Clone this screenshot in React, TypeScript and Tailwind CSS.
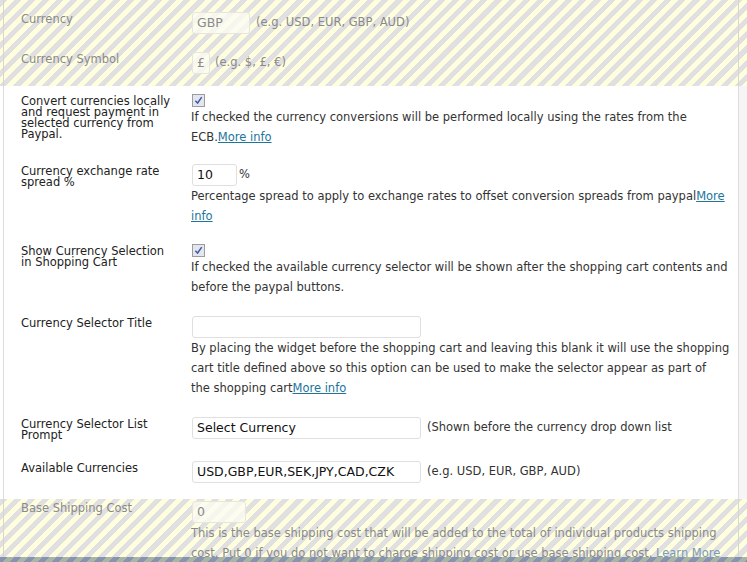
import type { ReactNode } from 'react';

const stripes =
	'bg-[repeating-linear-gradient(135deg,#e0e0e0_0px,#e0e0e0_5px,#ffffdf_5px,#ffffdf_10px)]';

function Link({ children }: { children: ReactNode }) {
	return <a className="text-[#21759b] underline">{children}</a>;
}

function Checkbox() {
	return (
		<span className="flex h-[13px] w-[13px] items-center justify-center border border-[#9c9c9c] bg-[#e4e6ef]">
			<svg viewBox="0 0 10 10" className="h-[9px] w-[9px]">
				<path d="M1.5 5.2 L4 7.8 L8.6 1.2" fill="none" stroke="#3d5aa6" strokeWidth="1.6" />
			</svg>
		</span>
	);
}

function Row({
	label,
	children,
	className = '',
}: {
	label: ReactNode;
	children: ReactNode;
	className?: string;
}) {
	return (
		<div className={`flex ${className}`}>
			<div className="w-[188px] shrink-0 pl-[17px] pr-[20px] pt-[2px] text-[11.5px] leading-[11px] text-[#222]">
				{label}
			</div>
			<div className="flex-1">{children}</div>
		</div>
	);
}

function DisabledRow({
	label,
	children,
	className = '',
}: {
	label: ReactNode;
	children: ReactNode;
	className?: string;
}) {
	return (
		<div className={`flex ${className}`}>
			<div className="w-[188px] shrink-0 pl-[17px] pr-[20px] pt-[2px] text-[11.5px] leading-[11px]">
				{label}
			</div>
			<div className="flex-1">{children}</div>
		</div>
	);
}

function Desc({ children }: { children: ReactNode }) {
	return <p className="-ml-px whitespace-nowrap text-[11.5px] leading-[20px]">{children}</p>;
}

const input = 'h-[22px] rounded-[3px] border border-[#dfdfdf] px-[4px] text-[12.5px] leading-[20px]';

export default function App() {
	return (
		<div className="h-[562px] overflow-hidden bg-white font-['DejaVu_Sans',Verdana,sans-serif] text-[#333]">
			{/* disabled rows */}
			<section className={stripes}>
				<div className="ml-[3px] w-[736px] border-x border-[#d6d6cc] pb-[12px] pt-[12px] text-[#8a8a8a]">
					<DisabledRow label="Currency">
						<div className="flex items-center gap-[6px]">
							<div className={`${input} w-[58px] border-[#e6e6dc] bg-[#fbfbf2]/80 text-[#8a8a8a]`}>GBP</div>
							<span className="text-[11.5px]">(e.g. USD, EUR, GBP, AUD)</span>
						</div>
					</DisabledRow>
					<DisabledRow label="Currency Symbol" className="mt-[18px]">
						<div className="flex items-center gap-[5px]">
							<div className={`${input} w-[18px] border-[#e6e6dc] bg-[#fbfbf2]/80 px-[3px] text-[#8a8a8a]`}>£</div>
							<span className="text-[11.5px]">(e.g. $, £, €)</span>
						</div>
					</DisabledRow>
				</div>
			</section>

			{/* enabled rows */}
			<section className="flex">
				<div className="ml-[3px] w-[736px] border-x border-[#dcdcdc] bg-white pb-[16px] pt-[8px] text-[#333]">
					<Row label="Convert currencies locally and request payment in selected currency from Paypal.">
						<Checkbox />
						<Desc>
							If checked the currency conversions will be performed locally using the rates from the
							<br />
							ECB.<Link>More info</Link>
						</Desc>
					</Row>
					<Row label="Currency exchange rate spread %" className="mt-[17px]">
						<div className="flex items-center gap-[2px]">
							<div className={`${input} w-[45px] text-[#111]`}>10</div>
							<span className="text-[11.5px]">%</span>
						</div>
						<Desc>
							Percentage spread to apply to exchange rates to offset conversion spreads from paypal
							<Link>
								More
								<br />
								info
							</Link>
						</Desc>
					</Row>
					<Row label="Show Currency Selection in Shopping Cart" className="mt-[18px]">
						<Checkbox />
						<Desc>
							If checked the available currency selector will be shown after the shopping cart contents and
							<br />
							before the paypal buttons.
						</Desc>
					</Row>
					<Row label="Currency Selector Title" className="mt-[19px]">
						<div className={`${input} w-[229px]`} />
						<Desc>
							By placing the widget before the shopping cart and leaving this blank it will use the shopping
							<br />
							cart title defined above so this option can be used to make the selector appear as part of
							<br />
							the shopping cart<Link>More info</Link>
						</Desc>
					</Row>
					<Row label="Currency Selector List Prompt" className="mt-[19px]">
						<div className="flex items-center gap-[6px]">
							<div className={`${input} w-[229px] text-[#111]`}>Select Currency</div>
							<span className="text-[11.5px]">(Shown before the currency drop down list</span>
						</div>
					</Row>
					<Row label="Available Currencies" className="mt-[20px]">
						<div className="flex items-center gap-[6px]">
							<div className={`${input} w-[229px] text-[#111]`}>USD,GBP,EUR,SEK,JPY,CAD,CZK</div>
							<span className="text-[11.5px]">(e.g. USD, EUR, GBP, AUD)</span>
						</div>
					</Row>
				</div>
				<div className="flex-1 bg-[#f5f5f5]" />
			</section>

			{/* disabled rows */}
			<section className={stripes}>
				<div className="ml-[3px] h-[58px] w-[736px] overflow-hidden border-x border-[#d6d6cc] pt-[2px] text-[#8a8a8a]">
					<DisabledRow label="Base Shipping Cost">
						<div className={`${input} w-[54px] border-[#e6e6dc] bg-[#fbfbf2]/80 text-[#8a8a8a]`}>0</div>
						<Desc>
							This is the base shipping cost that will be added to the total of individual products shipping
							<br />
							cost. Put 0 if you do not want to charge shipping cost or use base shipping cost.{' '}
							<span className="text-[#7a9bb0]">Learn More</span>
						</Desc>
					</DisabledRow>
				</div>
			</section>
			<div className="h-[6px] bg-[repeating-linear-gradient(135deg,#8794b0_0px,#8794b0_5px,#a9b4a8_5px,#a9b4a8_10px)]" />
		</div>
	);
}
